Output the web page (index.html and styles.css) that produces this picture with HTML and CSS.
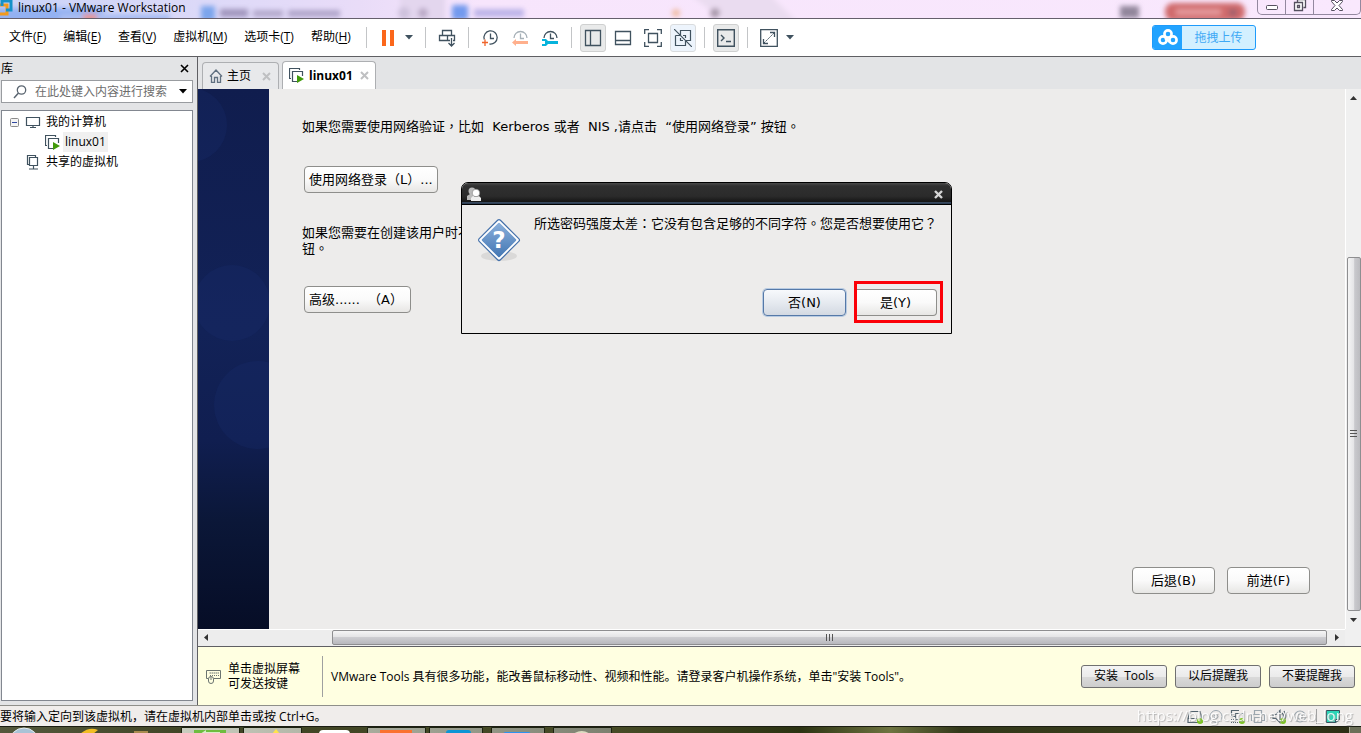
FILE: index.html
```html
<!DOCTYPE html>
<html lang="zh-CN">
<head>
<meta charset="utf-8">
<title>linux01 - VMware Workstation</title>
<link rel="stylesheet" href="styles.css">
</head>
<body>
<div class="app">
  <header class="titlebar">
    <svg class="glass" width="1361" height="18" viewBox="0 0 1361 18" aria-hidden="true">
      <defs><filter id="soft" x="-20%" y="-50%" width="140%" height="200%"><feGaussianBlur stdDeviation="2.5"/></filter></defs>
      <g filter="url(#soft)">
        <path d="M-9 8H110L70 30H-9z" fill="#93b1f2"/><path d="M60 14h110v12H60z" fill="#a9bdf3"/>
        <path d="M400-5h45v30h-45z" fill="#e3d6ee"/>
        <path d="M690-5h80l30 30h-70z" fill="#eadcf0"/>
        <rect x="83" y="14" width="14" height="8" fill="#e79693"/>
        <rect x="201" y="6" width="14" height="15" fill="#7ba5ec"/>
        <rect x="220" y="9" width="28" height="8" fill="#a196bd"/><rect x="253" y="10" width="30" height="7" fill="#b3a9cc"/><rect x="288" y="10" width="52" height="7" fill="#b0a6ca"/>
        <circle cx="404" cy="13" r="6" fill="#cdc1dc"/><circle cx="423" cy="13" r="5" fill="#b9a9c6"/>
        <rect x="452" y="5" width="16" height="15" rx="2" fill="#729aee"/><rect x="474" y="9" width="50" height="8" fill="#bcb4e8"/>
        <circle cx="676" cy="13" r="4" fill="#f0bda4"/><circle cx="715" cy="13" r="5" fill="#a898aa"/>
        <rect x="1120" y="6" width="19" height="12" fill="#92869b"/>
        <rect x="1165" y="3" width="80" height="18" rx="8" fill="#d06a6c"/><rect x="1176" y="9" width="45" height="6" fill="#e59a9c"/><rect x="1229" y="9" width="8" height="7" fill="#a0606c"/>
      </g>
    </svg>
    <svg class="logo" width="14" height="16" viewBox="0 0 14 16" aria-hidden="true"><path d="M-1 5h8v9h-9" fill="none" stroke="#f39a1b" stroke-width="3"/><path d="M2 6V1h9v9H6" fill="none" stroke="#1591c9" stroke-width="3"/></svg>
    <h1 class="title">linux01 - VMware Workstation</h1>
    <div class="winctl">
      <button aria-label="最小化"><svg width="14" height="12"><rect x="1.500" y="5.500" width="11" height="4" rx="1" fill="#fff" stroke="#55505f"/></svg></button>
      <button aria-label="还原"><svg width="14" height="12"><path d="M4.500 2.500v-3h8v8h-2M1.500 2.500h8v8h-8zM4.500 5.500h2v2h-2z" fill="#fff" stroke="#55505f" stroke-width="1.300"/></svg></button>
      <button class="wide" aria-label="关闭"><svg width="14" height="12"><path d="M1.500.5h3L7 3 9.500.5h3v1L9 5.500l3.500 4v1h-3L7 8l-2.500 2.500h-3v-1L5 5.500l-3.500-4z" fill="#fff" stroke="#55505f"/></svg></button>
    </div>
  </header>

  <div class="toolbar">
    <nav class="menu">
      <button>文件(<u>F</u>)</button><button>编辑(<u>E</u>)</button><button>查看(<u>V</u>)</button><button>虚拟机(<u>M</u>)</button><button>选项卡(<u>T</u>)</button><button>帮助(<u>H</u>)</button>
    </nav>
    <i class="sep"></i>
    <button class="tool" aria-label="暂停"><svg width="18" height="18"><path d="M3 1h4v16H3zM11 1h4v16h-4z" fill="#fb671b"/></svg></button>
    <button class="drop" aria-label="电源选项"><svg width="8" height="5"><path d="M0 0h8L4 4.500z" fill="#40525f"/></svg></button>
    <i class="sep"></i>
    <button class="tool" aria-label="发送 Ctrl+Alt+Del"><svg width="18" height="18"><path d="M4.500 1.500h9v5h-9zM1.500 6.500h8v5h-8zM12 11.500H9.500v-5h7v5H15M13.500 9v8M10.500 14l3 3 3-3" fill="none" stroke="#40525f" stroke-width="1.300"/></svg></button>
    <i class="sep"></i>
    <div class="tools">
      <button class="tool" aria-label="拍摄快照"><svg width="18" height="18"><path d="M3.300 10.500A6.600 6.600 0 1 1 8.500 15M9.500 4.500v5H13" fill="none" stroke="#40525f" stroke-width="1.300"/><path d="M1 13.500h6M4 10.500v6.500" stroke="#f0642a" stroke-width="1.300"/></svg></button>
      <button class="tool" aria-label="恢复快照"><svg width="18" height="18"><path d="M3 9a6.500 6.500 0 1 1 13 0M9.500 4.500v5H13" fill="none" stroke="#a7b1b8" stroke-width="1.300"/><path d="M1 13.500l4-3.500v2h12v3H5v2z" fill="#ffb08d"/></svg></button>
      <button class="tool" aria-label="管理快照"><svg width="18" height="18"><path d="M3 9a6.500 6.500 0 1 1 13 0M9.500 4.500v5H13" fill="none" stroke="#40525f" stroke-width="1.300"/><path d="M1 10h4l2 2h10v3H7l-2 2H1v-2h3v-3H1z" fill="#06b3dc"/></svg></button>
    </div>
    <i class="sep"></i>
    <div class="tools">
      <button class="tool on" aria-label="显示库"><svg width="18" height="18"><path d="M1.500 1.500h15v15h-15zM6.500 1.500v15" fill="none" stroke="#40525f" stroke-width="1.300"/></svg></button>
      <button class="tool" aria-label="显示缩略图栏"><svg width="18" height="18"><path d="M1.500 2.500h15v13h-15zM1.500 11.500h15" fill="none" stroke="#40525f" stroke-width="1.300"/></svg></button>
      <button class="tool" aria-label="全屏"><svg width="18" height="18"><path d="M.7 5V.7H5M13 .7h4.300V5M17.300 13v4.300H13M5 17.300H.7V13M4.500 4.500h9v9h-9z" fill="none" stroke="#40525f" stroke-width="1.300"/></svg></button>
      <button class="tool hot" aria-label="Unity"><svg width="18" height="18"><path d="M6.500 6V1.500h10v10H12M1.500 6.500h5M1.500 6.500v10h10V12M6.500 9v2.500H9M9 6.500h2.500V9M0 0l18 18" fill="none" stroke="#40525f" stroke-width="1.200"/></svg></button>
    </div>
    <i class="sep"></i>
    <button class="tool on" aria-label="控制台视图"><svg width="18" height="18"><path d="M.7.7h16.600v16.600H.7zM4 6l3 3-3 3M9 12.500h5" fill="none" stroke="#40525f" stroke-width="1.400"/></svg></button>
    <i class="sep"></i>
    <button class="tool" aria-label="拉伸客户机"><svg width="18" height="18"><path d="M.7.7h16.600v16.600H.7zM10 3.500h4.500V8M3.500 10v4.500H8" fill="none" stroke="#40525f" stroke-width="1.300"/><path d="M4 14L14 4" stroke="#40525f" stroke-dasharray="2 1"/></svg></button>
    <button class="drop" aria-label="拉伸选项"><svg width="8" height="5"><path d="M0 0h8L4 4.500z" fill="#40525f"/></svg></button>
    <button class="upload"><span class="cloud"><svg width="20" height="17" viewBox="0 0 20 17"><g fill="none" stroke="#fff" stroke-width="2.600"><circle cx="10" cy="5" r="3.600"/><circle cx="5" cy="11" r="3.600"/><circle cx="15" cy="11" r="3.600"/><path d="M7 9l5 4"/></g></svg></span><span class="label">拖拽上传</span></button>
  </div>

  <div class="work">
    <aside class="library">
      <div class="libhead"><h2>库</h2><button aria-label="关闭库"><svg width="9" height="9"><path d="M1 1l7 7M8 1L1 8" stroke="#000" stroke-width="1.600"/></svg></button></div>
      <div class="search">
        <svg width="14" height="14"><circle cx="8.500" cy="5" r="4.200" fill="none" stroke="#5a6570" stroke-width="1.300"/><path d="M5.500 8L1 13" stroke="#5a6570" stroke-width="1.500"/></svg>
        <input type="text" aria-label="搜索库" placeholder="在此处键入内容进行搜索">
        <button aria-label="搜索选项"><svg width="8" height="5"><path d="M0 0h8L4 4.500z"/></svg></button>
      </div>
      <div class="tree">
        <div class="node"><svg class="twist" width="9" height="9"><rect x=".5" y=".5" width="8" height="8" rx="1" fill="#f4f4f4" stroke="#8b8b8b"/><path d="M2 4.500h5" stroke="#3048a0"/></svg><svg width="16" height="14"><path d="M1.500 2.500h13v8h-13zM8 11v2M5 12.500h6" fill="none" stroke="#40525f" stroke-width="1.200"/></svg><span>我的计算机</span></div>
        <div class="node child"><svg width="16" height="15"><path d="M10.500 2V.5H.5v10H2M4 13.500H3.500v-10h10V8M3.500 13.500H8" fill="none" stroke="#40525f" stroke-width="1.200"/><path d="M8 7l7 4-7 4z" fill="#419a0a"/></svg><span class="sel">linux01</span></div>
        <div class="node shared"><svg width="16" height="15"><path d="M4 9.500H2.500v-9h8V2M4.500 2.500h8v8h-8zM8.500 11v3M4 14h9" fill="none" stroke="#40525f" stroke-width="1.200"/></svg><span>共享的虚拟机</span></div>
      </div>
    </aside>

    <main class="main">
      <div class="tabs">
        <div class="tab"><svg width="14" height="14"><path d="M1 7.500L7 1l6 6.500M2.500 7v6.500h3v-5h3v5h3V7" fill="none" stroke="#607080" stroke-width="1.300"/></svg><button>主页</button><button class="x" aria-label="关闭主页"><svg width="9" height="9"><path d="M1 1l7 7M8 1L1 8" stroke="#bfc0c2" stroke-width="2"/></svg></button></div>
        <div class="tab active"><svg width="16" height="15"><path d="M10.500 2V.5H.5v10H2M4 13.500H3.500v-10h10V8M3.500 13.500H8" fill="none" stroke="#40525f" stroke-width="1.200"/><path d="M8 7l7 4-7 4z" fill="#419a0a"/></svg><button>linux01</button><button class="x" aria-label="关闭 linux01"><svg width="9" height="9"><path d="M1 1l7 7M8 1L1 8" stroke="#bfc0c2" stroke-width="2"/></svg></button></div>
      </div>

      <div class="viewport">
        <div class="guest" lang="zh-Hant">
          <div class="stripe"><svg width="71" height="540"><g fill="#1c3478" fill-opacity=".22"><circle cx="-8" cy="36" r="37"/><circle cx="34" cy="214" r="38"/><circle cx="60" cy="316" r="44"/></g></svg></div>
          <div class="page">
            <p>如果您需要使用网络验证，比如&nbsp; Kerberos 或者&nbsp; NIS ,请点击&nbsp; “使用网络登录” 按钮。</p>
            <button class="gtk login">使用网络登录（L）...</button>
            <p class="advanced">如果您需要在创建该用户时不<br>钮。</p>
            <button class="gtk adv">高级......&nbsp;&nbsp;（A）</button>
            <div class="steps"><button class="gtk">后退(B)</button><button class="gtk">前进(F)</button></div>
          </div>

          <div class="dialog" role="dialog" aria-label="密码强度">
            <div class="dlghead"><svg width="15" height="14"><circle cx="5" cy="4" r="3.500" fill="#b9b9b9"/><path d="M0 13V9l3-2h4v6z" fill="#b9b9b9"/><circle cx="9" cy="6" r="3.800" fill="#fff" stroke="#777" stroke-width=".6"/><path d="M4 14v-3l2-2q3 2 6 0l2 2v3z" fill="#eee"/></svg><button aria-label="关闭"><svg width="9" height="9"><path d="M1 1l7 7M8 1L1 8" stroke="#d6d6d6" stroke-width="2.400"/></svg></button></div>
            <div class="dlgbody">
              <svg class="ask" width="44" height="46" viewBox="0 0 44 46"><defs><linearGradient id="q" x1="0" y1="0" x2="1" y2="1"><stop offset="0" stop-color="#8bb0db"/><stop offset="1" stop-color="#4276b3"/></linearGradient></defs><ellipse cx="22" cy="38" rx="18" ry="5" fill="#000" fill-opacity=".08"/><rect x="7" y="7" width="30" height="30" rx="2" transform="rotate(45 22 22)" fill="#fff" stroke="#4672ab" stroke-width="1.200"/><rect x="9.500" y="9.500" width="25" height="25" rx="1" transform="rotate(45 22 22)" fill="url(#q)"/><text x="22" y="30" text-anchor="middle" class="qmark">?</text></svg>
              <p>所选密码强度太差：它没有包含足够的不同字符。您是否想要使用它？</p>
            </div>
            <div class="dlgfoot"><button class="gtk focus">否(N)</button><span class="mark"><button class="gtk">是(Y)</button></span></div>
          </div>
        </div>
        <div class="vscroll"><svg width="7" height="4"><path d="M0 4h7L3.500 0z" fill="#333"/></svg><span class="thumb"><svg width="7" height="8"><path d="M0 .5h7M0 3.500h7M0 6.500h7" stroke="#555"/></svg></span><svg width="7" height="4"><path d="M0 0h7L3.500 4z" fill="#333"/></svg></div>
        <div class="hscroll"><svg width="4" height="7"><path d="M4 0v7L0 3.500z" fill="#333"/></svg><span class="thumb"><svg width="8" height="7"><path d="M.5 0v7M3.500 0v7M6.500 0v7" stroke="#555"/></svg></span><svg width="4" height="7"><path d="M0 0v7l4-3.500z" fill="#333"/></svg></div>
        <div class="corner"></div>
      </div>

      <div class="tips">
        <svg width="15" height="15"><path d="M2 9.500H.5v-8h14v8H8M3 4h10M3 6.500h10" fill="none" stroke="#6b7470"/><path d="M3 4h10M3 6.500h10" stroke="#ffffe1" stroke-dasharray="1 1"/><rect x="2.500" y="7.500" width="5" height="7" rx="2.500" fill="#ffffe1" stroke="#6b7470"/><path d="M5 8v3" stroke="#6b7470"/></svg>
        <p class="grab">单击虚拟屏幕<br>可发送按键</p>
        <p class="tooltext">VMware Tools 具有很多功能，能改善鼠标移动性、视频和性能。请登录客户机操作系统，单击"安装 Tools"。</p>
        <div class="tipbtns"><button>安装&nbsp; Tools</button><button>以后提醒我</button><button>不要提醒我</button></div>
      </div>
    </main>
  </div>

  <footer class="status">
    <span class="hint">要将输入定向到该虚拟机，请在虚拟机内部单击或按 Ctrl+G。</span>
    <div class="devices">
      <svg width="16" height="15"><path d="M3 2.500h10l2 7v4H1v-4zM1 9.500h9" fill="none" stroke="#53636e" stroke-width="1.200"/><circle cx="13" cy="12" r="3" fill="#7cc520"/></svg>
      <svg width="16" height="15"><g fill="none" stroke="#9ba6ae"><circle cx="8" cy="7.500" r="6"/><circle cx="8" cy="7.500" r="2"/></g></svg>
      <svg width="16" height="15"><path d="M10 1.500H2.500v6H7M6.500 4.500h8v6h-8z" fill="none" stroke="#53636e" stroke-width="1.200"/><path d="M2 10.500h5M2 13.500h9" stroke="#53636e" stroke-dasharray="1 1"/><circle cx="13" cy="12" r="3" fill="#7cc520"/></svg>
      <svg width="16" height="15"><path d="M4.500 5V1.500h7V5M4 11.500H1.500v-6h13v6H12M4.500 8.500h7v5h-7z" fill="none" stroke="#9ba6ae" stroke-width="1.200"/></svg>
      <svg width="16" height="15"><path d="M2 5.500h3l4-4v12l-4-4H2zM11 4q3 3 0 7M13 2q3 4 1 8" fill="none" stroke="#53636e" stroke-width="1.200"/><circle cx="12" cy="12" r="3" fill="#7cc520"/></svg>
      <svg width="16" height="15"><g fill="none" stroke="#9ba6ae" stroke-width="1.200"><circle cx="8" cy="7.500" r="5.500"/><circle cx="8" cy="7.500" r="2.500"/></g></svg>
      <i class="bar"></i>
      <svg width="16" height="15"><path d="M1.500 1.500h13v9l-4 3h-9z" fill="#2cd5b8" stroke="#32515c"/><path d="M14.500 10.500h-4v3z" fill="#fff" stroke="#32515c"/></svg>
    </div>
    <span class="watermark">https://blog.csdn.net/web_long</span>
  </footer>
  <div class="taskbar">
    <svg width="620" height="7" aria-hidden="true"><defs><linearGradient id="tb"><stop offset="0" stop-color="#c9cdbf"/><stop offset="1" stop-color="#7c806f"/></linearGradient></defs>
      <circle cx="24" cy="16" r="15" fill="#a9c3d6" stroke="#e4ecf0"/><path d="M80 7q9-8 18-4l-5 4z" fill="#f1bd24"/><path d="M134 4h14v3h-14z" fill="#a98c50"/>
      <g fill="url(#tb)" stroke="#1d2210"><path d="M181.500.5h58v8h-58zM243.500.5h58v8h-58zM367.500.5h58v8h-58zM429.500.5h53v8h-53zM491.500.5h53v8h-53zM553.500.5h58v8h-58z"/></g>
      <path d="M194 3h32v4h-32z" fill="#6ebd3f"/><path d="M200 7l6-4v2h14v2z" fill="#d7ecc8"/><path d="M272 7l4-5 4 5z" fill="#ffe34b"/><rect x="319" y="3" width="31" height="9" rx="4" fill="#fff"/><path d="M380 3h32v4h-32z" fill="#fa7130"/><rect x="446" y="3" width="25" height="8" rx="3" fill="#0c95d5"/><rect x="503" y="5" width="28" height="6" rx="3" fill="#2c92f0"/><path d="M573 7q9-6 17 0z" fill="#dddcc2"/></svg>
    <span class="desk"></span>
  </div>
</div>
</body>
</html>
```

FILE: styles.css
```css
* { box-sizing: border-box; }
body, h1, h2, p { margin: 0; }
body {
  font: 12px/16px "Open Sans", "Noto Sans CJK SC", sans-serif;
  color: #000;
}
button, input { font: inherit; color: inherit; }
button { padding: 0; border: 0; background: none; }
svg { display: block; flex: none; }

.app { display: flex; flex-direction: column; height: 100vh; overflow: hidden; }

.titlebar {
  position: relative;
  display: flex;
  align-items: flex-start;
  height: 19px;
  border-bottom: 1px solid #655f6c;
  background: linear-gradient(90deg, #c9d3f7 0, #dcd9f8 200px, #e9dcf8 360px, #f7e5fc 480px, #f9e8fd 1361px);
  overflow: hidden;
}
.glass { position: absolute; left: 0; top: 0; }
.logo, .title, .winctl { position: relative; }
.title { margin-left: 4px; font-size: 12px; line-height: 16px; font-weight: 400; }
.winctl { display: flex; height: 15px; margin-left: auto; border: 1px solid #93889f; border-top: 0; border-radius: 0 0 5px 5px; }
.winctl button { display: flex; justify-content: center; width: 28px; border-right: 1px solid #93889f; }
.winctl .wide { width: 46px; border: 0; }

.toolbar { display: flex; align-items: center; height: 38px; padding-left: 9px; background: #fff; border-bottom: 1px solid #5f5f63; }
.menu { display: flex; gap: 17px; width: 357px; padding-bottom: 2px; white-space: nowrap; }
.menu u { text-underline-offset: 2px; }
.sep { flex: none; width: 1px; height: 21px; margin: 0 8px; background: #c3c5c7; }
.menu + .sep { margin-left: 0; }
.tools { display: flex; gap: 4px; }
.tool { display: flex; align-items: center; justify-content: center; width: 26px; height: 28px; border: 1px solid transparent; border-radius: 3px; }
.tool.on { background: #e9eaea; border-color: #cfd0d0; }
.tool.hot { background: #edf4fc; border-color: #dadcde; }
.drop { display: flex; align-items: center; justify-content: center; width: 16px; height: 28px; }
.upload { display: flex; width: 104px; height: 25px; margin-left: auto; margin-right: 105px; border: 1px solid #1e9bfb; border-radius: 3px; background: #d3f0ff; overflow: hidden; color: #3fa9f5; }
.cloud { display: flex; align-items: center; justify-content: center; width: 29px; height: 100%; background: #22a3ff; }
.label { flex: 1; line-height: 24px; }

.work { flex: 1; display: flex; min-height: 0; background: #e3e4e6; }
.library { display: flex; flex-direction: column; width: 193px; margin-right: 4px; padding: 0 0 4px 1px; }
.libhead { display: flex; align-items: center; justify-content: space-between; height: 23px; padding-right: 4px; }
.libhead h2 { font-size: 12px; font-weight: 400; }
.search { display: flex; align-items: center; height: 23px; margin-bottom: 7px; padding: 0 5px 0 11px; background: #fff; border: 1px solid #999ca0; }
.search input { flex: 1; min-width: 0; margin-left: 8px; padding: 0; border: 0; outline: 0; }
.search input::placeholder { color: #6d6d6d; opacity: 1; }
.tree { flex: 1; padding: 1px 0 0 8px; background: #fff; border: 1px solid #828790; }
.node { display: flex; align-items: center; height: 20px; gap: 5px; }
.twist { margin-right: 1px; }
.child { padding-left: 35px; gap: 2px; }
.shared { padding-left: 15px; }
.sel { padding: 2px; background: #f0f0f0; }

.main { flex: 1; display: flex; flex-direction: column; min-width: 0; border-left: 1px solid #5f5f63; }
.tabs { display: flex; align-items: flex-end; gap: 3px; height: 32px; padding-left: 4px; }
.tab { display: flex; align-items: center; gap: 4px; height: 27px; padding: 0 7px 0 6px; border: 1px solid #adafb2; border-bottom: 0; border-radius: 4px 4px 0 0; background: #e8e9eb; }
.tab .x { margin-left: 7px; }
.active { height: 28px; background: #fff; font-weight: 700; }
.tab.active { padding-right: 6px; }
.tab.active .x { margin-left: 3px; }

.viewport { flex: 1; display: grid; grid-template: minmax(0, 1fr) 17px / minmax(0, 1fr) 16px; min-height: 0; border-bottom: 1px solid #5f5f63; }
.guest { position: relative; display: flex; background: #edeceb; overflow: hidden; font: 13px/16px "DejaVu Sans", "Noto Sans CJK TC", sans-serif; }
.stripe { width: 71px; background: linear-gradient(180deg, #101d4e 0, #122257 45%, #101e50 65%, #0b1738 80%, #060d26 100%); overflow: hidden; }
.page { flex: 1; display: flex; flex-direction: column; align-items: flex-start; padding: 30px 35px 35px 33px; }
.gtk { height: 27px; min-width: 83px; border: 1px solid #8e8e8b; border-radius: 4px; background: linear-gradient(#fff, #fafafa 50%, #e7e6e4); }
.page > .gtk { margin-left: 2px; padding: 0 4px; text-align: left; white-space: nowrap; }
.login { width: 134px; margin-top: 31px; }
.advanced { margin-top: 32px; }
.adv { width: 107px; margin-top: 29px; }
.steps { display: flex; gap: 12px; margin-top: auto; margin-left: auto; }

.dialog { position: absolute; left: 263px; top: 93px; width: 491px; height: 152px; display: flex; flex-direction: column; border: 1px solid #000; border-radius: 7px 7px 0 0; background: #edeceb; overflow: hidden; }
.dlghead { display: flex; align-items: center; justify-content: space-between; height: 22px; padding: 0 8px 0 5px; background: linear-gradient(#4a4a4a 0, #303030 3px, #2b2b2b 60%, #151515 19px, #5a7ba5 20px, #000 21px); }
.dlgbody { display: flex; gap: 13px; padding: 11px 0 0 15px; white-space: nowrap; }
.ask { margin-top: 2px; }
.qmark { font: 700 23px "DejaVu Sans", sans-serif; fill: #fff; }
.dlgfoot { display: flex; align-items: baseline; justify-content: flex-end; gap: 8px; margin-top: auto; padding: 0 8px 10px 0; }
.focus { border-color: #5579a8; background: linear-gradient(#f7f9fc, #e6eaf0 50%, #d3d9e2); box-shadow: 0 0 0 1px #b8cbe2; }
.mark { display: flex; width: 89px; height: 42px; padding: 5px 3px 4px 0; border: 3px solid #fb0007; }
.mark .gtk { width: 80px; min-width: 0; padding-right: 2px; border-left: 0; border-radius: 0 4px 4px 0; }

.vscroll { display: flex; flex-direction: column; align-items: center; padding: 7px 0; background: #f0f0f0; border-left: 1px solid #fff; }
.vscroll .thumb { display: flex; align-items: center; justify-content: center; flex: 355 0 0; width: 14px; margin: 157px 0 7px; border: 1px solid #8e8e90; border-radius: 2px; background: linear-gradient(90deg, #f5f5f5, #e4e4e6 50%, #c9c9cd 55%, #bcbcc0); }
.hscroll { display: flex; align-items: center; padding: 0 6px 1px; background: #ededed; border-top: 1px solid #fff; }
.hscroll .thumb { display: flex; align-items: center; justify-content: center; flex: 1; height: 15px; margin: 0 8px 0 124px; border: 1px solid #8e8e90; border-radius: 2px; background: linear-gradient(#f5f5f5, #e4e4e6 45%, #cdcdd1 50%, #b8b8bd); }
.corner { background: #f0f0f0; }

.tips { display: flex; align-items: center; height: 58px; padding: 0 6px 0 8px; background: #ffffe1; white-space: nowrap; }
.grab { width: 94px; margin-left: 7px; line-height: 15px; }
.tooltext { height: 41px; padding-left: 8px; border-left: 1px solid #9fa0a0; line-height: 42px; }
.tipbtns { display: flex; gap: 8px; margin-left: auto; }
.tipbtns button { width: 86px; height: 23px; border: 1px solid #707070; border-radius: 3px; background: linear-gradient(#f4f4f4, #ebebeb 50%, #dadada 52%, #cdcdcd); }

.status { position: relative; display: flex; align-items: center; justify-content: space-between; height: 21px; padding-right: 20px; border-top: 1px solid #8f8f8a; background: #f0edeb; white-space: nowrap; }
.hint { padding-top: 2px; }
.devices { display: flex; align-items: center; gap: 5px; }
.bar { width: 1px; height: 15px; margin: 0 3px; background: #a0a0a0; }
.watermark { position: absolute; right: 8px; top: 0; font-size: 15px; line-height: 18px; color: #fff; opacity: .85; text-shadow: 1px 1px 1px #aaa; }
.taskbar { display: flex; justify-content: space-between; height: 7px; border-top: 1px solid #1b1d12; background: linear-gradient(90deg, #54583c 0, #3f4424 200px, #474b26 620px, #2c3312 800px, #6e7440 890px, #33381a 960px, #3b3e1c 1200px, #2b2e14 1361px); overflow: hidden; }
.desk { width: 12px; border-left: 1px solid #a7a994; background: #6c6f58; }
```
